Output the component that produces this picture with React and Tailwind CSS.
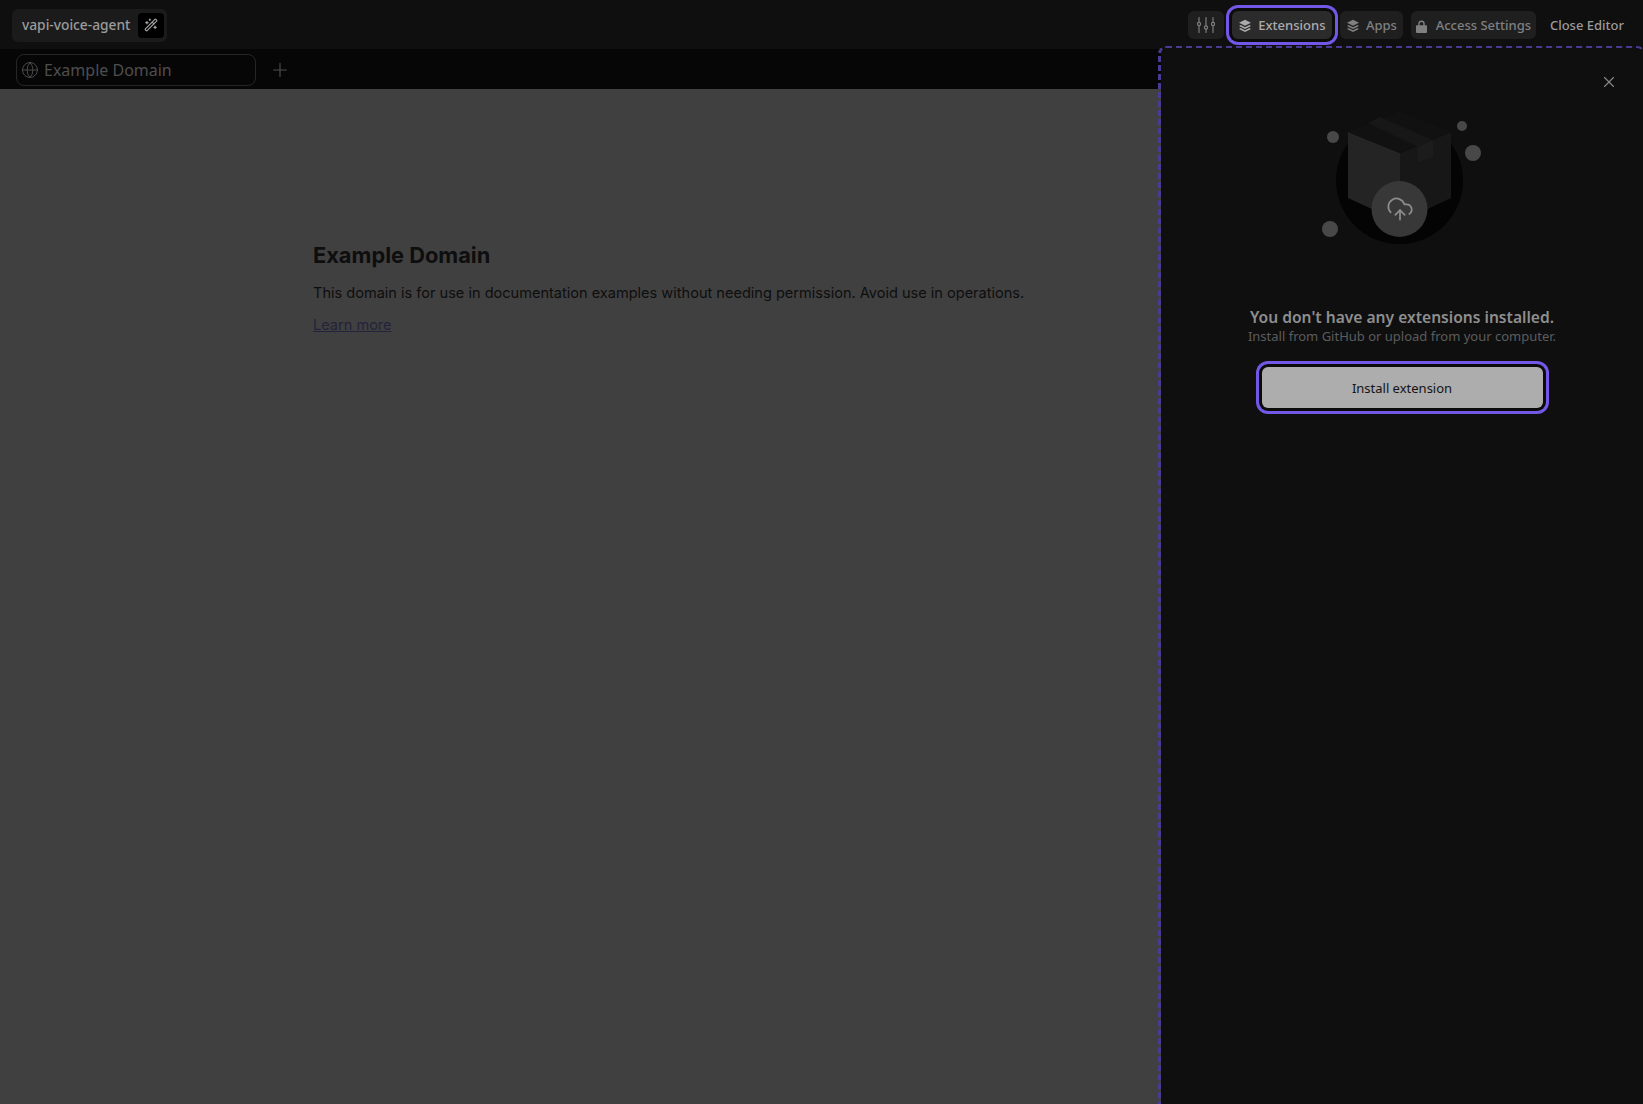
import { CloudUpload, Globe, Plus, WandSparkles, X } from "lucide-react";

function SlidersIcon() {
  return (
    <svg width="18" height="18" viewBox="0 0 18 18" fill="none" stroke="currentColor" strokeWidth="1.2" strokeLinecap="round">
      <path d="M2 1.5v5M2 9.600v6.900M9 1.500v8.500M9 13.100v3.400M16 1.500v5M16 9.600v6.900" />
      <circle cx="2" cy="8" r="1.600" />
      <circle cx="9" cy="11.500" r="1.600" />
      <circle cx="16" cy="8" r="1.600" />
    </svg>
  );
}

function LayersIcon() {
  return (
    <svg width="14" height="14" viewBox="0 0 14 14" fill="currentColor">
      <path d="M7 .8 13 3.800 7 6.800 1 3.800z" />
      <path d="M2.600 6 7 8.200 11.400 6 13 6.900 7 9.900 1 6.900z" />
      <path d="M2.600 9.100 7 11.300 11.400 9.100 13 10 7 13 1 10z" />
    </svg>
  );
}

function LockIcon() {
  return (
    <svg width="11" height="13" viewBox="0 0 12 14" fill="currentColor">
      <path d="M2.500 5.500V4a3.500 3.500 0 0 1 7 0v1.500H11a1 1 0 0 1 1 1V13a1 1 0 0 1-1 1H1a1 1 0 0 1-1-1V6.500a1 1 0 0 1 1-1zM4 5.500h4V4a2 2 0 0 0-4 0z" />
    </svg>
  );
}

function BoxIllustration() {
  return (
    <svg width="170" height="140" viewBox="0 0 170 140">
      <circle cx="82.500" cy="75.500" r="63.500" fill="#040404" />
      <path d="M31 27 83 48V117L31 93z" fill="#242424" />
      <path d="M83 48 134 27V93L83 117z" fill="#171717" />
      <path d="M31 27 83 6 134 27 83 48z" fill="#111112" />
      <path d="M51 18 63 12 116 35 101 42z" fill="#171717" />
      <path d="M101 42 116 35V52L101 57z" fill="#1c1c1c" />
      <circle cx="16" cy="32" r="6" fill="#484848" />
      <circle cx="145" cy="21" r="5" fill="#484848" />
      <circle cx="156" cy="48" r="8" fill="#484848" />
      <circle cx="13" cy="124" r="8" fill="#484848" />
      <circle cx="82.500" cy="104" r="28" fill="#383838" />
    </svg>
  );
}

export default function App() {
  return (
    <div className="flex h-screen flex-col overflow-hidden bg-[#0f0f10] font-['Noto_Sans',sans-serif] text-[#9b9b9b]">
      {/* Top bar */}
      <div className="flex h-[49px] shrink-0 items-center justify-between pl-3 pr-[19px] pt-px">
        <div className="flex h-[33px] items-center gap-2 rounded-md bg-[#1b1b1c] pl-[10px] pr-[3px]">
          <span className="text-[13.750px] font-medium">vapi-voice-agent</span>
          <span className="flex h-[25px] w-[26px] items-center justify-center rounded bg-black text-[#a5a5a5]">
            <WandSparkles size={14} />
          </span>
        </div>
        <div className="flex items-center text-[13px] font-medium">
          <button className="flex h-7 w-9 items-center justify-center rounded-md bg-[#1f1f20] text-[#7c7c7c]">
            <SlidersIcon />
          </button>
          <button className="ml-2 flex h-7 w-[100px] items-center justify-center gap-[6px] rounded-md bg-[#2b2b2c] pt-[2px] text-[#ababab] shadow-[0_0_0_3px_#0b0b0c,0_0_0_6px_#7358e8]">
            <LayersIcon />
            Extensions
          </button>
          <button className="ml-2 flex h-7 w-[63px] items-center justify-center gap-[6px] rounded-md bg-[#1f1f20] pt-[2px] text-[#808080]">
            <LayersIcon />
            Apps
          </button>
          <button className="ml-2 flex h-7 w-[125px] items-center justify-center gap-[9px] rounded-md bg-[#1f1f20] pt-[2px] text-[#808080]">
            <LockIcon />
            Access Settings
          </button>
          <span className="ml-[14px] pt-[2px] text-[#9b9b9b]">Close Editor</span>
        </div>
      </div>

      <div className="flex min-h-0 flex-1">
        {/* Preview */}
        <div className="flex min-w-0 flex-1 flex-col">
          <div className="flex h-10 shrink-0 items-center bg-[#060607] pl-4 pt-[2px]">
            <div className="flex h-8 w-60 items-center gap-[5px] rounded-lg border border-[#262626] pl-1 text-base text-[#4e4e4e]">
              <Globe size={18} strokeWidth={1.25} />
              Example Domain
            </div>
            <Plus size={22} strokeWidth={1.25} className="ml-[13px] text-[#4e4e4e]" />
          </div>
          <div className="flex-1 bg-[#404040] pl-[313px] pt-[149px] font-['Inter',sans-serif] text-[#0e0e0e]">
            <h1 className="text-[21.800px] font-bold leading-[34px]">Example Domain</h1>
            <p className="mt-[9px] text-[14.550px] leading-6">
              This domain is for use in documentation examples without needing permission. Avoid use in operations.
            </p>
            <a className="mt-2 block text-[14.550px] leading-6 text-[#23233c] underline">Learn more</a>
          </div>
        </div>

        {/* Extensions panel */}
        <div className="-mb-2 -ml-[3px] -mr-[2px] -mt-[3px] flex w-[487px] shrink-0 flex-col items-center rounded-t-lg border-2 border-l-[3px] border-dashed border-[#4a3a94] bg-[#0f0f10] bg-clip-padding">
          <div className="flex w-full justify-end pr-[25px] pt-[25px] text-[#8a8a8a]">
            <X size={18} strokeWidth={1.5} />
          </div>
          <div className="relative mt-[14px] h-[140px] w-[170px]">
            <BoxIllustration />
            <CloudUpload size={28} strokeWidth={1.5} className="absolute left-[69px] top-[90px] text-[#8c8c8c]" />
          </div>
          <h2 className="mt-[60px] text-[15.600px] font-semibold leading-6 text-[#8e8e8e]">You don't have any extensions installed.</h2>
          <p className="text-[13px] leading-[15px] text-[#5c5c5c]">Install from GitHub or upload from your computer.</p>
          <button className="mt-[23px] h-[41px] w-[281px] rounded-md bg-[#adadad] pt-[3px] text-[13px] text-[#141414] shadow-[0_0_0_3px_#0b0b0c,0_0_0_6px_#7358e8]">
            Install extension
          </button>
        </div>
      </div>
    </div>
  );
}
